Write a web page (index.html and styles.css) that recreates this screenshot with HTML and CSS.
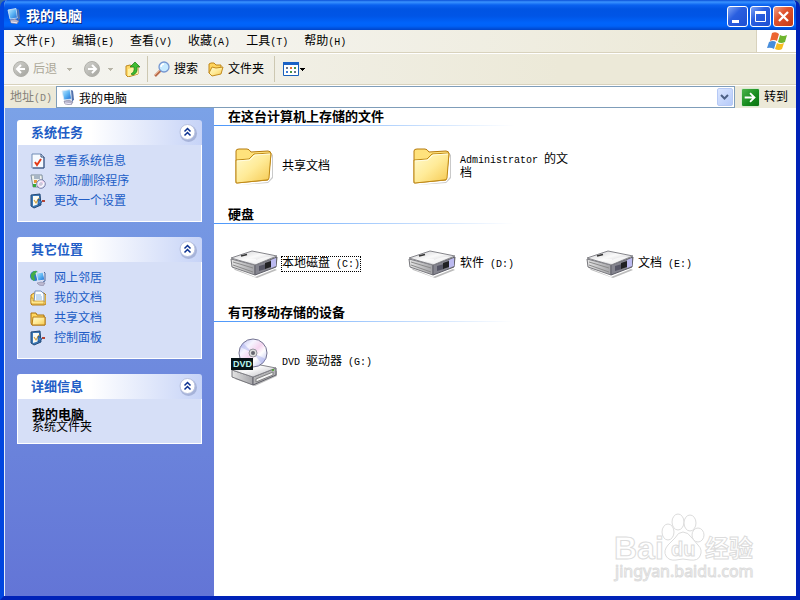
FILE: index.html
```html
<!DOCTYPE html>
<html lang="zh-CN">
<head>
<meta charset="utf-8">
<title>我的电脑</title>
<link rel="stylesheet" href="styles.css">
</head>
<body>
<svg class="defs" aria-hidden="true">
  <defs>
    <linearGradient id="gFolder" x1="0" y1="0" x2="1" y2="1"><stop offset="0" stop-color="#fffbd0"/><stop offset=".5" stop-color="#ffeb98"/><stop offset="1" stop-color="#f5c84f"/></linearGradient>
    <linearGradient id="gScreen" x1="0" y1="0" x2="1" y2="1"><stop offset="0" stop-color="#c9edff"/><stop offset=".5" stop-color="#5cb4f4"/><stop offset="1" stop-color="#1c68cf"/></linearGradient>
    <linearGradient id="gTop" x1="0" y1="0" x2="1" y2="1"><stop offset="0" stop-color="#c9c9cd"/><stop offset=".45" stop-color="#fafafa"/><stop offset="1" stop-color="#b8b8be"/></linearGradient>
    <linearGradient id="gSide" x1="0" y1="0" x2="1" y2="0"><stop offset="0" stop-color="#e4e4e4"/><stop offset="1" stop-color="#a3a3a7"/></linearGradient>
    <linearGradient id="gDisc" x1="0" y1="0" x2="1" y2="1"><stop offset="0" stop-color="#b2b4ed"/><stop offset=".3" stop-color="#f6f5ff"/><stop offset=".5" stop-color="#f5d5ef"/><stop offset=".65" stop-color="#ffffff"/><stop offset="1" stop-color="#a8aee8"/></linearGradient>
    <linearGradient id="gGrey" x1="0" y1="0" x2="1" y2="1"><stop offset="0" stop-color="#d4d4d0"/><stop offset="1" stop-color="#a2a29c"/></linearGradient>
  </defs>
  <symbol id="computer" viewBox="0 0 16 16">
    <path d="M4 12l5-1 4 2-2 3-6-1z" fill="#b4b2ca" stroke="#77758f" stroke-width=".5"/>
    <path d="M2 2l8-1.500 1.500 9.500-7.500 1z" fill="url(#gScreen)" stroke="#d9e8f7" stroke-width=".8"/>
    <path d="M11 1l2 .8 1 8.600-2 2.600z" fill="#5372ac"/>
    <path d="M5 14l6 .8" stroke="#ece8f7"/>
  </symbol>
  <symbol id="folder" viewBox="0 0 40 40">
    <path d="M5 39l29-3 4-5V8l1 1v23l-5 5z" fill="#777" opacity=".4"/>
    <path d="M2 5q0-2 3-2h8q2 0 4 3l17-1q3 0 3 3l-3 26L2 37z" fill="#ffe27c" stroke="#b57a0c"/>
    <path d="M2 14l13-1 5-5 17-1-2 25q0 2-3 2L3 37q-1 0-1-2z" fill="url(#gFolder)" stroke="#c08a16"/>
    <path d="M3 15l13-1 5-5 15-1" fill="none" stroke="#fffce0"/>
  </symbol>
  <symbol id="drive" viewBox="0 0 48 28">
    <path d="M3 18l22 9 20-8 2 1-20 8-22-8z" fill="#555" opacity=".4"/>
    <path d="M1 9l24 6v10L2 17z" fill="url(#gSide)" stroke="#77777c"/>
    <path d="M25 15l22-8-1 10-21 8z" fill="#85858f" stroke="#5e5e68"/>
    <path d="M1 8L22 1l25 5-22 9z" fill="url(#gTop)" stroke="#85858a"/>
    <path d="M26 10q10-4 16-3l-16 7-12-4q5-2 12-1z" fill="#fff" opacity=".65"/>
    <path d="M3 12l20 6M3 15l20 7" stroke="#8a8a8a"/>
    <path d="M11 6l6-1.500" stroke="#333" stroke-width="1.500"/>
    <path d="M29 16l7-2v5l-7 2z" fill="#555565"/><path d="M35 13l6-2v6l-6 2z" fill="#202023"/><path d="M41 10l5-2v8l-5 2z" fill="#bcbaf0"/>
  </symbol>
  <symbol id="info" viewBox="0 0 16 16"><path d="M2 1h9l3 3v11H2z" fill="#f7faff" stroke="#718bb5"/><path d="M11 1v3h3M14 4v11H3" fill="none" stroke="#354e7b"/><path d="M5 9l2 3 4-6" fill="none" stroke="#e43c18" stroke-width="2"/></symbol>
  <symbol id="programs" viewBox="0 0 16 16"><path d="M1 2h11l1 12H3z" fill="#eef1ee" stroke="#7f8f9d"/><path d="M4 2h6v4H4z" fill="#a8b6c5"/><path d="M3 11h3v3H3z" fill="#37a83e"/><path d="M4 7h3v3H4z" fill="#e89a3a"/><circle cx="11" cy="11" r="4.300" fill="url(#gDisc)" stroke="#7a80a8"/><circle cx="11" cy="11" r="1.200" fill="#fff" stroke="#8586ad" stroke-width=".6"/></symbol>
  <symbol id="settings" viewBox="0 0 16 16"><path d="M1 2l9-1 1 11-7 3-3-2z" fill="#3c79b6" stroke="#244a78"/><path d="M3 3h6v8l-6 2z" fill="#fbfbf3"/><path d="M4 7l2 3 3-5" fill="none" stroke="#d6a63d" stroke-width="1.200"/><path d="M8 6l4 3-4 3z" fill="#3f87d4" stroke="#133d72" stroke-width=".6"/><path d="M12 8h3" stroke="#b34537" stroke-width="2"/></symbol>
  <symbol id="network" viewBox="0 0 16 16"><circle cx="5" cy="6" r="5" fill="#2f78ca"/><path d="M1 4q3-4 6-3L6 4 4 6l1 3-1 2Q0 9 1 4z" fill="#43ad47"/><path d="M6 3l7-1 2 8-7 1z" fill="url(#gScreen)" stroke="#e5e6f4"/><path d="M14 2l1 1v8l-2 1" stroke="#496599" fill="none"/><path d="M7 13l4-1 4 1-2 3-4-1z" fill="#bbb8d0" stroke="#7c7b98" stroke-width=".5"/></symbol>
  <symbol id="docs" viewBox="0 0 16 16"><path d="M1 5l3-2h10l2 2v9l-2 1H2l-1-1z" fill="#ffd969" stroke="#b67d18"/><path d="M5 1h6l3 3v8H4z" fill="#fafdff" stroke="#7893be"/><path d="M6 5h5M6 7h6M6 9h6" stroke="#8eb9e5"/><path d="M1 8h2v3h11v3H2l-1-1z" fill="#ffe88d" stroke="#bd861f" stroke-width=".7"/></symbol>
  <symbol id="sfolder" viewBox="0 0 16 16"><path d="M1 3h5l1 2h7v2h1v8H2l-1-2z" fill="#ffd760" stroke="#aa710f"/><path d="M3 7h12v8H2z" fill="url(#gFolder)" stroke="#b77c16"/></symbol>
  <symbol id="open" viewBox="0 0 16 16"><path d="M1 12V3l2-1h3l2 2h5v3l-8 7z" fill="#ffd45c" stroke="#be861b"/><path d="M1 12l3-6 4 1 7-1-2 7-9 2z" fill="url(#gFolder)" stroke="#c28b1e"/></symbol>
  <symbol id="up" viewBox="0 0 16 16"><path d="M1 5l4-1 2 1 6-1v9L3 16l-2-2z" fill="#ffd866" stroke="#be8920"/><path d="M3 8l10-3v8L3 15z" fill="#fff2a2"/><path d="M6 13q4-2 3-7H5l5-5 5 5h-3q1 6-4 8z" fill="#3fbd31" stroke="#187917" stroke-width=".7"/></symbol>
  <symbol id="back" viewBox="0 0 16 16"><circle cx="8" cy="8" r="7.500" fill="url(#gGrey)" stroke="#afafa9"/><path d="M12 8H5M8 4L4 8l4 4" fill="none" stroke="#fff" stroke-width="2"/></symbol>
  <symbol id="forward" viewBox="0 0 16 16"><circle cx="8" cy="8" r="7.500" fill="url(#gGrey)" stroke="#afafa9"/><path d="M4 8h7M8 4l4 4-4 4" fill="none" stroke="#fff" stroke-width="2"/></symbol>
  <symbol id="search" viewBox="0 0 16 16"><path d="M1 15l6-6" stroke="#b86b4b" stroke-width="2.500"/><path d="M1 14l6-6" stroke="#e9b18d"/><circle cx="10" cy="6" r="5" fill="#c7eaff" stroke="#7798d1" stroke-width="1.300"/><path d="M7 6q0-3 3-3" fill="none" stroke="#fff" stroke-width="1.500"/></symbol>
  <symbol id="views" viewBox="0 0 16 16"><path d="M.5 1.500h15v13H.5z" fill="#fff" stroke="#1760bd"/><path d="M0 1h16v3H0z" fill="#1b62c5"/><path d="M3 6h2v2H3zM11 10h2v2h-2z" fill="#69758c"/><path d="M7 6h2v2H7z" fill="#e46f35"/><path d="M11 6h2v2h-2zM7 10h2v2H7z" fill="#479443"/><path d="M3 10h2v2H3z" fill="#3e7bd2"/></symbol>
  <symbol id="caret" viewBox="0 0 5 3"><path d="M0 0h5v1H4v1H3v1H2V2H1V1H0z" fill="currentColor"/></symbol>
  <symbol id="collapse" viewBox="0 0 20 20"><circle cx="10.500" cy="10.500" r="8.500" fill="#8e9bc4" opacity=".6"/><circle cx="9.500" cy="9" r="7.500" fill="#fff" stroke="#b7c1df"/><path d="M6.500 8.500l3-3 3 3M6.500 12.500l3-3 3 3" fill="none" stroke="#0a3090" stroke-width="1.500"/></symbol>
</svg>

<div class="window">
  <header class="titlebar">
    <svg class="i16"><use href="#computer"/></svg>
    <h1>我的电脑</h1>
    <button class="cap" aria-label="最小化"><svg viewBox="0 0 19 19"><path d="M4 13h7v3H4z" fill="#fff"/></svg></button>
    <button class="cap" aria-label="最大化"><svg viewBox="0 0 19 19"><path d="M4.500 4.500h10v10h-10z" fill="none" stroke="#fff"/><path d="M4 4h11v3H4z" fill="#fff"/></svg></button>
    <button class="cap close" aria-label="关闭"><svg viewBox="0 0 19 19"><path d="M5 5l9 9M14 5l-9 9" stroke="#fff" stroke-width="2.300"/></svg></button>
  </header>

  <nav class="menubar">
    <button>文件<span class="lat">(F)</span></button><button>编辑<span class="lat">(E)</span></button><button>查看<span class="lat">(V)</span></button><button>收藏<span class="lat">(A)</span></button><button>工具<span class="lat">(T)</span></button><button>帮助<span class="lat">(H)</span></button>
    <div class="brand"><svg viewBox="0 0 20 18"><path d="M5 1q4-2 7 1l-2 7q-3-2-7 0z" fill="#ec6530"/><path d="M13 3q3 2 7 0l-2 7q-4 2-7 0z" fill="#6fb52f"/><path d="M2 10q4-2 7 0l-2 7q-3-2-7-1z" fill="#478ddb"/><path d="M10 11q3 2 7 0l-2 6q-3 2-7 0z" fill="#f7bd22"/></svg></div>
  </nav>

  <div class="toolbar">
    <button class="tool off back"><svg class="i16"><use href="#back"/></svg>后退</button>
    <svg class="caret grey"><use href="#caret"/></svg>
    <button class="tool off next" aria-label="前进"><svg class="i16"><use href="#forward"/></svg></button>
    <svg class="caret grey"><use href="#caret"/></svg>
    <button class="tool" aria-label="向上"><svg class="i16"><use href="#up"/></svg></button>
    <span class="sep"></span>
    <button class="tool"><svg class="i16"><use href="#search"/></svg>搜索</button>
    <button class="tool folders"><svg class="i16"><use href="#open"/></svg>文件夹</button>
    <span class="sep"></span>
    <button class="tool views" aria-label="查看方式"><svg class="i16"><use href="#views"/></svg><svg class="caret"><use href="#caret"/></svg></button>
  </div>

  <div class="address">
    <label for="addr">地址<span class="lat">(D)</span></label>
    <div class="combo">
      <svg class="i16"><use href="#computer"/></svg>
      <input id="addr" type="text" value="我的电脑">
      <button class="drop" aria-label="展开"><svg viewBox="0 0 9 6"><path d="M1 1l3.500 3.500L8 1" fill="none" stroke="#4d6185" stroke-width="2"/></svg></button>
    </div>
    <button class="go"><svg viewBox="0 0 19 19"><path d="M3 9.500h11M9 4.500l5 5-5 5" fill="none" stroke="#fff" stroke-width="2"/></svg>转到</button>
  </div>

  <div class="body">
    <aside class="side">
      <section class="panel">
        <header><h2>系统任务</h2><button class="fold" aria-label="折叠系统任务"><svg><use href="#collapse"/></svg></button></header>
        <ul>
          <li><a href="#"><svg class="i16"><use href="#info"/></svg>查看系统信息</a></li>
          <li><a href="#"><svg class="i16"><use href="#programs"/></svg>添加/删除程序</a></li>
          <li><a href="#"><svg class="i16"><use href="#settings"/></svg>更改一个设置</a></li>
        </ul>
      </section>
      <section class="panel">
        <header><h2>其它位置</h2><button class="fold" aria-label="折叠其它位置"><svg><use href="#collapse"/></svg></button></header>
        <ul>
          <li><a href="#"><svg class="i16"><use href="#network"/></svg>网上邻居</a></li>
          <li><a href="#"><svg class="i16"><use href="#docs"/></svg>我的文档</a></li>
          <li><a href="#"><svg class="i16"><use href="#sfolder"/></svg>共享文档</a></li>
          <li><a href="#"><svg class="i16"><use href="#settings"/></svg>控制面板</a></li>
        </ul>
      </section>
      <section class="panel">
        <header><h2>详细信息</h2><button class="fold" aria-label="折叠详细信息"><svg><use href="#collapse"/></svg></button></header>
        <div class="detail"><strong>我的电脑</strong><span>系统文件夹</span></div>
      </section>
    </aside>

    <main class="files">
      <section>
        <h2>在这台计算机上存储的文件</h2>
        <div class="items">
          <div class="item"><svg class="pic pic-folder"><use href="#folder"/></svg><span>共享文档</span></div>
          <div class="item"><svg class="pic pic-folder"><use href="#folder"/></svg><span><span class="lat">Administrator </span>的文档</span></div>
        </div>
      </section>
      <section>
        <h2>硬盘</h2>
        <div class="items">
          <div class="item"><svg class="pic pic-drive"><use href="#drive"/></svg><span class="focus">本地磁盘<span class="lat"> (C:)</span></span></div>
          <div class="item"><svg class="pic pic-drive"><use href="#drive"/></svg><span>软件<span class="lat"> (D:)</span></span></div>
          <div class="item"><svg class="pic pic-drive"><use href="#drive"/></svg><span>文档<span class="lat"> (E:)</span></span></div>
        </div>
      </section>
      <section>
        <h2>有可移动存储的设备</h2>
        <div class="items">
          <div class="item">
            <svg class="pic pic-dvd" viewBox="0 0 48 48">
              <path d="M5 41l20 7 22-10v-5z" fill="#555" opacity=".4"/>
              <path d="M2 32l21 7v8L2 39z" fill="url(#gSide)" stroke="#77777c"/>
              <path d="M23 39l23-9v7l-23 10z" fill="#b4b4b6" stroke="#5e5e68"/>
              <path d="M2 32l18-7 26 5-23 9z" fill="url(#gTop)" stroke="#85858a"/>
              <path d="M26 41l17-7v3l-17 7z" fill="#f4f4f4" stroke="#808080"/>
              <circle cx="23" cy="15" r="14" fill="url(#gDisc)" stroke="#737391"/>
              <path d="M23 15L10 9l3-4zM23 15l13 6-4 5z" fill="#9da4ea" opacity=".4"/>
              <circle cx="23" cy="15" r="4" fill="#ddd" stroke="#96969e"/><circle cx="23" cy="15" r="2" fill="#65656e"/>
              <path d="M1 20h22v12H1z" fill="#071316"/>
              <text x="3" y="29" class="dvd-text">DVD</text>
              <circle cx="43" cy="32" r="1" fill="#43a51d"/>
            </svg>
            <span><span class="lat">DVD </span>驱动器<span class="lat"> (G:)</span></span></div>
        </div>
      </section>
      <svg class="mark" viewBox="0 0 150 72">
        <ellipse cx="58" cy="21" rx="6" ry="8"/><ellipse cx="68" cy="11" rx="6" ry="8"/><ellipse cx="80" cy="12" rx="6" ry="8"/><ellipse cx="88" cy="24" rx="6" ry="7"/>
        <path d="M73 21q-5 0-8 6l-7 7q-5 6-2 11 3 5 10 4l7-1 7 1q8 1 10-4 3-6-2-11l-6-7q-4-6-9-6z"/>
        <text class="m-big" x="4" y="48">Bai</text>
        <text class="m-du" x="61" y="45">du</text>
        <text class="m-cn" x="95" y="46">经验</text>
        <text class="m-url" x="5" y="66">jingyan.baidu.com</text>
      </svg>
    </main>
  </div>
</div>
</body>
</html>
```
FILE: styles.css
```css
* { box-sizing: border-box; }
body, h1, h2, ul { margin: 0; padding: 0; }
body {
  font: 12px/14px "Liberation Sans", "Noto Sans CJK SC", sans-serif;
  color: #000;
  background: #3a6ea5;
}
button, input { font: inherit; color: inherit; border: 0; padding: 0; background: none; }
svg { display: block; flex: none; }
.defs { position: absolute; width: 0; height: 0; }
.lat { font-family: "Liberation Mono", monospace; font-size: 10px; line-height: 12px; white-space: pre-wrap; }
.i16 { width: 16px; height: 16px; }

.window {
  display: flex;
  flex-direction: column;
  min-height: 100vh;
  border: solid #0046e0;
  border-width: 0 4px 4px;
  border-color: #0046e0 #0022b8 #0022b8 #0046e0;
  border-radius: 7px 7px 0 0;
  background: #ece9d8;
  overflow: hidden;
}

.titlebar {
  display: flex;
  align-items: center;
  gap: 2px;
  height: 30px;
  margin: 0 -4px;
  padding: 2px 6px 0 6px;
  background: linear-gradient(#0a4fd8 0, #3a93ff 2px, #0a62f0 5px, #0054e3 9px, #0055e6 16px, #0064fb 23px, #0062f8 26px, #0044c8 30px);
}
.titlebar h1 {
  flex: 1;
  margin-left: 2px;
  font-size: 14px;
  line-height: 18px;
  color: #fff;
  text-shadow: 1px 1px 0 #0a2a80;
}
.cap {
  width: 21px;
  height: 21px;
  border: 1px solid #fff;
  border-radius: 3px;
  background: linear-gradient(135deg, #7fa4f5, #2a5fe0 40%, #1d4fd2);
}
.cap svg { width: 19px; height: 19px; }
.cap.close { background: linear-gradient(135deg, #f0a088, #e0532e 40%, #c43a14); }

.menubar {
  display: flex;
  height: 23px;
  padding-left: 2px;
  background: linear-gradient(90deg, #f8f8f7, #ece9d8 90%);
  border-bottom: 1px solid #d8d2bd;
}
.menubar button { padding: 0 8px; white-space: nowrap; }
.brand {
  width: 40px;
  margin-left: auto;
  padding: 2px 0 0 10px;
  background: #fff;
  border-left: 1px solid #d8d2bd;
}
.brand svg { width: 20px; height: 18px; }

.toolbar {
  display: flex;
  align-items: center;
  height: 32px;
  padding-left: 9px;
  border-top: 1px solid #fff;
  border-bottom: 1px solid #d8d2bd;
  background: linear-gradient(90deg, #f5f5f2, #ece9d8 70%);
}
.tool { display: flex; align-items: center; gap: 4px; }
.off { color: #aca899; }
.back { margin-right: 10px; }
.next { margin-right: 8px; }
.caret { width: 5px; height: 3px; }
.grey { color: #b8b5a8; margin-right: 12px; }
.sep { width: 1px; height: 26px; margin: 0 6px; background: #cdc8b2; }
.folders { margin: 0 4px 0 10px; }
.views { gap: 1px; margin-left: 2px; }

.address {
  display: flex;
  align-items: center;
  height: 23px;
  border-top: 1px solid #fff;
  background: #ece9d8;
}
.address label { width: 52px; padding-left: 6px; color: #85827a; white-space: nowrap; }
.combo {
  display: flex;
  align-items: center;
  flex: 1;
  min-width: 0;
  height: 22px;
  padding: 1px 1px 1px 3px;
  border: 1px solid #7f9db9;
  background: #fff;
}
.combo input { flex: 1; min-width: 0; height: 18px; padding: 0 3px; outline: 0; }
.drop {
  display: flex;
  align-items: center;
  justify-content: center;
  width: 16px;
  height: 18px;
  border: 1px solid #b6c9f5;
  border-radius: 2px;
  background: linear-gradient(135deg, #dbe6ff, #b5caf9);
}
.drop svg { width: 9px; height: 6px; }
.go { display: flex; align-items: center; gap: 4px; margin: 0 8px 0 6px; }
.go svg { width: 19px; height: 19px; border-radius: 2px; border: 1px solid #d5ead0; background: linear-gradient(135deg, #4cb44b, #148a1c 60%, #0d7314); }

.body { display: flex; flex: 1; background: #fff; }
.side {
  width: 210px;
  flex: none;
  display: flex;
  flex-direction: column;
  gap: 15px;
  padding: 12px;
  border-left: 1px solid #e4edfb;
  background: linear-gradient(#7ba2e7, #6375d6);
}
.panel header {
  display: flex;
  align-items: center;
  justify-content: space-between;
  height: 25px;
  padding: 0 4px 0 14px;
  border-radius: 3px 3px 0 0;
  background: linear-gradient(90deg, #fff 40%, #c6d3f7);
}
.panel h2 { font-size: 13px; line-height: 16px; color: #215dc6; }
.fold svg { width: 20px; height: 20px; }
.panel ul { list-style: none; padding: 6px 12px 10px; }
.panel ul, .detail { border: 1px solid #fff; border-top: 0; background: #d6dff7; }
.panel a { display: flex; align-items: center; gap: 8px; height: 20px; color: #215dc6; text-decoration: none; }
.detail { display: flex; flex-direction: column; padding: 9px 14px 10px; line-height: 12px; }
.detail strong { font-size: 13px; line-height: 13px; }

.files { position: relative; flex: 1; min-width: 0; }
.files h2 {
  height: 18px;
  padding-left: 14px;
  font-size: 13px;
  line-height: 17px;
  background: linear-gradient(90deg, #4a96fa, #fff) left bottom / 300px 1px no-repeat;
}
.items { display: grid; grid-template-columns: repeat(auto-fill, 178px); padding-left: 16px; }
.item { display: flex; align-items: center; height: 80px; gap: 4px; line-height: 12px; }
.item > span { max-width: 114px; }
.pic { width: 48px; }
.pic-folder { height: 40px; }
.pic-drive { height: 28px; }
.pic-dvd { height: 48px; }
.focus { outline: 1px dotted #000; }
.dvd-text { font: bold 9px "Liberation Sans", sans-serif; fill: #b8f4ef; }

.mark {
  position: absolute;
  right: 36px;
  bottom: 13px;
  width: 150px;
  height: 72px;
  fill: #fff;
  stroke: #dcdcdc;
  stroke-width: 1;
}
.m-big { font: bold 32px "Liberation Sans", sans-serif; }
.m-du { font: bold 20px "Liberation Sans", sans-serif; }
.m-cn { font: bold 24px "Noto Sans CJK SC", sans-serif; }
.m-url { font: 16px "Noto Sans", sans-serif; }
```
